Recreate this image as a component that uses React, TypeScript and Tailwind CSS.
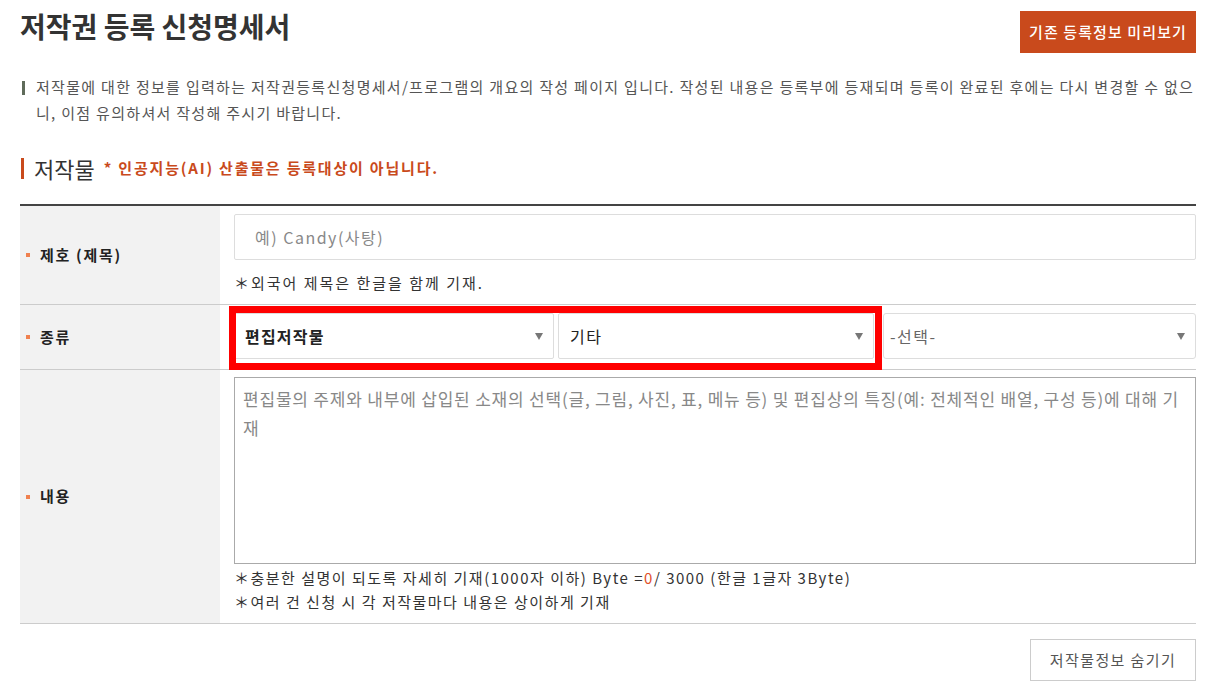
const font = { fontFamily: '"Noto Sans CJK KR", "Noto Sans", sans-serif' };

function Arrow() {
  return (
    <svg width="8" height="7" viewBox="0 0 8 7" className="shrink-0">
      <path d="M0 0 H8 L4 7 Z" fill="#777" />
    </svg>
  );
}

function Label({ text }: { text: string }) {
  return (
    <div className="w-[200px] shrink-0 bg-[#f2f2f2] flex items-center pl-[6px]">
      <span className="w-[4px] h-[4px] bg-[#f0814f] mr-[10px]" />
      <span className="text-[15px] font-bold text-[#222] tracking-[1.7px]">{text}</span>
    </div>
  );
}

export default function App() {
  return (
    <div style={font} className="w-[1212px] h-[697px] bg-white text-[#333] overflow-hidden">
      <div className="ml-[20px] w-[1176px]">
        {/* header */}
        <div className="flex justify-between items-start">
          <h1 className="mt-[6px] text-[28px] leading-[40px] font-bold text-[#333]">
            저작권 등록 신청명세서
          </h1>
          <button className="mt-[11px] h-[42px] w-[176px] bg-[#c94a1c] text-white text-[15px] font-medium tracking-[1.1px]">
            기존 등록정보 미리보기
          </button>
        </div>

        {/* description */}
        <div className="relative mt-[21px] pl-[16px] text-[15px] leading-[26px] text-[#555] whitespace-nowrap tracking-[1.3px]">
          <span className="absolute left-[2px] top-[7px] w-[3px] h-[14px] bg-[#5f6b5a]" />
          저작물에 대한 정보를 입력하는 저작권등록신청명세서/프로그램의 개요의 작성 페이지 입니다. 작성된 내용은 등록부에 등재되며 등록이 완료된 후에는 다시 변경할 수 없으
          <br />
          니, 이점 유의하셔서 작성해 주시기 바랍니다.
        </div>

        {/* section heading */}
        <div className="mt-[27px] flex items-center h-[30px]">
          <span className="ml-[1px] w-[3px] h-[21px] bg-[#c94a1c]" />
          <span className="ml-[10px] text-[22px] text-[#333]">저작물</span>
          <span className="ml-[9px] text-[15px] font-bold text-[#c94a1c] tracking-[1.8px]">* 인공지능(AI) 산출물은 등록대상이 아닙니다.</span>
        </div>

        {/* table */}
        <div className="relative mt-[21px] border-t-2 border-[#444]">
          {/* title row */}
          <div className="flex border-b border-[#ccc] h-[99px]">
            <Label text="제호 (제목)" />
            <div className="flex-1 pl-[14px] pt-[8px]">
              <div className="h-[46px] border border-[#ddd] rounded-[2px] flex items-center pl-[20px] text-[16px] text-[#888] tracking-[1.5px]">
                예) Candy(사탕)
              </div>
              <div className="mt-[11px] text-[15px] leading-[24px] text-[#333] tracking-[2px]">＊외국어 제목은 한글을 함께 기재.</div>
            </div>
          </div>

          {/* type row */}
          <div className="flex border-b border-[#ccc] h-[65px]">
            <Label text="종류" />
            <div className="flex-1 pl-[14px] pt-[8px] flex">
              <div className="w-[320px] h-[46px] border border-[#ddd] rounded-[2px] flex items-center justify-between pl-[10px] pr-[10px]">
                <span className="text-[16px] font-bold text-[#222] tracking-[1.2px]">편집저작물</span>
                <Arrow />
              </div>
              <div className="ml-[4px] w-[316px] h-[46px] border border-[#ddd] rounded-[2px] flex items-center justify-between pl-[11px] pr-[10px]">
                <span className="text-[16px] text-[#222] tracking-[1.5px]">기타</span>
                <Arrow />
              </div>
              <div className="ml-[9px] flex-1 h-[46px] border border-[#ddd] rounded-[3px] flex items-center justify-between pl-[6px] pr-[10px]">
                <span className="text-[16px] text-[#666] tracking-[1.5px]">-선택-</span>
                <Arrow />
              </div>
            </div>
          </div>

          {/* content row */}
          <div className="flex border-b border-[#ccc] h-[254px]">
            <Label text="내용" />
            <div className="flex-1 pl-[14px] pt-[7px]">
              <div className="h-[187px] border border-[#aaa] px-[8px] pt-[6px] text-[17px] leading-[29px] text-[#888] tracking-[0.8px] whitespace-nowrap">
                편집물의 주제와 내부에 삽입된 소재의 선택(글, 그림, 사진, 표, 메뉴 등) 및 편집상의 특징(예: 전체적인 배열, 구성 등)에 대해 기
                <br />
                재
              </div>
              <div className="mt-[2px] text-[15px] leading-[24px] text-[#333] tracking-[1.5px]">
                <div>
                  ＊충분한 설명이 되도록 자세히 기재(1000자 이하) Byte =<span className="text-[#e0502a]">0</span>/ 3000 (한글 1글자 3Byte)
                </div>
                <div>＊여러 건 신청 시 각 저작물마다 내용은 상이하게 기재</div>
              </div>
            </div>
          </div>

          {/* highlight annotation */}
          <div className="absolute left-[209px] top-[100px] w-[653px] h-[64px] border-[7px] border-[#ff0000] pointer-events-none" />
        </div>

        <div className="flex justify-end mt-[15px]">
          <button className="w-[166px] h-[42px] border border-[#ccc] text-[15px] text-[#555] tracking-[1.4px]">저작물정보 숨기기</button>
        </div>
      </div>
    </div>
  );
}
